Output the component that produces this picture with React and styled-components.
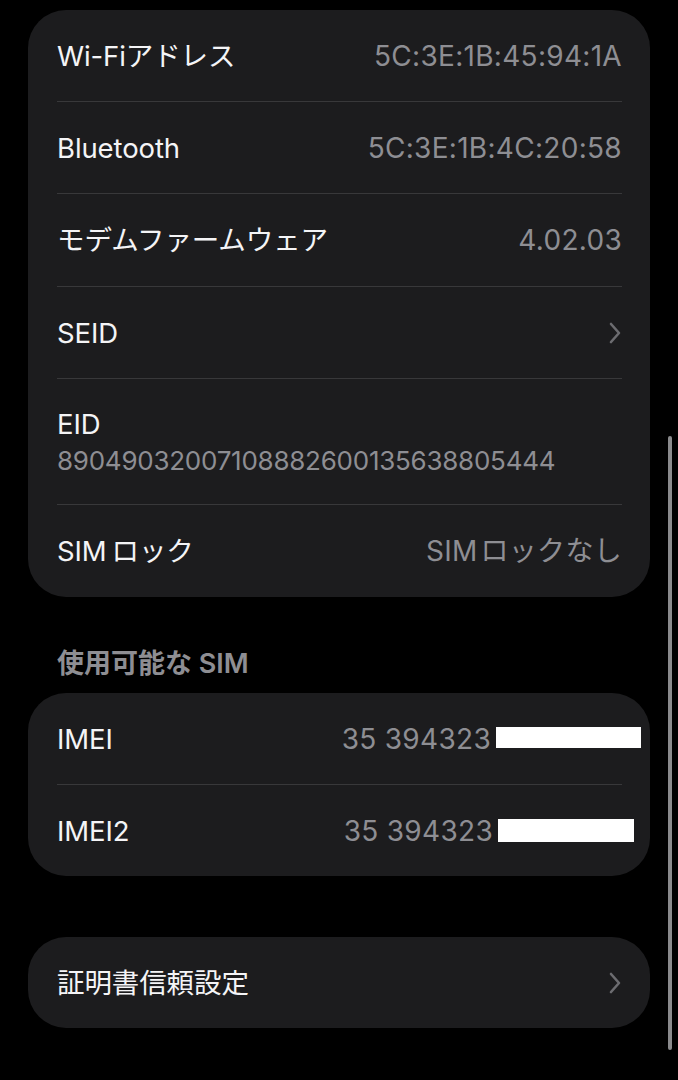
import styled, { createGlobalStyle } from 'styled-components'

const GlobalStyle = createGlobalStyle`
  html, body {
    margin: 0;
    padding: 0;
    background: #000;
  }
  body {
    font-family: Inter, "Noto Sans CJK JP", sans-serif;
    -webkit-font-smoothing: antialiased;
  }
`

const Page = styled.div`
  width: 678px;
  height: 1080px;
  overflow: hidden;
  background: #000;
  padding: 10px 28px 0 28px;
  box-sizing: border-box;
  display: flex;
  flex-direction: column;
`

const Card = styled.div`
  width: 622px;
  background: #1c1c1e;
  border-radius: ${p => p.$radius || 38}px;
  padding: 0 28px 0 29px;
  box-sizing: border-box;
  display: flex;
  flex-direction: column;
  margin-top: ${p => p.$top || 0}px;
`

const Row = styled.div`
  display: flex;
  align-items: center;
  justify-content: space-between;
  height: ${p => p.$h || 92}px;
  box-sizing: border-box;
  border-top: ${p => (p.$first ? 'none' : '1px solid #38383a')};
`

const StackRow = styled.div`
  display: flex;
  flex-direction: column;
  justify-content: center;
  gap: 4px;
  height: 126px;
  box-sizing: border-box;
  border-top: 1px solid #38383a;
`

const Label = styled.span`
  color: #f4f4f6;
  font-size: 27.5px;
  line-height: 34px;
  letter-spacing: -0.1px;
`

const Value = styled.span`
  color: #8e8e93;
  font-size: 28px;
  line-height: 34px;
  letter-spacing: 0.3px;
  display: flex;
  align-items: center;
  margin-right: ${p => p.$pull || 0}px;
`

const SubValue = styled.span`
  color: #8e8e93;
  font-size: 26px;
  line-height: 32px;
  letter-spacing: -0.25px;
`

const Redact = styled.span`
  display: inline-block;
  background: #fff;
  width: ${p => p.$w}px;
  height: ${p => p.$h}px;
  margin-left: 5px;
  margin-top: ${p => p.$dy || 0}px;
`

const SectionHeader = styled.div`
  color: #8e8e93;
  font-size: 27px;
  font-weight: 600;
  line-height: 34px;
  padding-left: 29px;
  margin-top: 50px;
  margin-bottom: 12px;
`

const ScrollBar = styled.div`
  position: fixed;
  right: 6px;
  top: 436px;
  width: 4px;
  height: 614px;
  border-radius: 2px;
  background: #8a8a8c;
`

const Chevron = () => (
  <svg width="14" height="22" viewBox="0 0 14 22">
    <polyline
      points="3,2 11,11 3,20"
      fill="none"
      stroke="#6c6c70"
      strokeWidth="2.6"
      strokeLinecap="round"
      strokeLinejoin="round"
    />
  </svg>
)

const App = () => {
  return (
    <>
      <GlobalStyle />
      <Page>
        <Card>
          <Row $first $h={91}>
            <Label>Wi-Fiアドレス</Label>
            <Value>5C:3E:1B:45:94:1A</Value>
          </Row>
          <Row>
            <Label>Bluetooth</Label>
            <Value>5C:3E:1B:4C:20:58</Value>
          </Row>
          <Row $h={93}>
            <Label>モデムファームウェア</Label>
            <Value>4.02.03</Value>
          </Row>
          <Row>
            <Label>SEID</Label>
            <Chevron />
          </Row>
          <StackRow>
            <Label>EID</Label>
            <SubValue>89049032007108882600135638805444</SubValue>
          </StackRow>
          <Row $h={93}>
            <Label>SIM{'\u2009'}ロック</Label>
            <Value>SIM{'\u200A'}ロックなし</Value>
          </Row>
        </Card>

        <SectionHeader>使用可能な SIM</SectionHeader>

        <Card>
          <Row $first $h={91}>
            <Label>IMEI</Label>
            <Value $pull={-19}>
              35 394323
              <Redact $w={145} $h={21} $dy={-2} />
            </Value>
          </Row>
          <Row>
            <Label>IMEI2</Label>
            <Value $pull={-12}>
              35 394323
              <Redact $w={136} $h={23} />
            </Value>
          </Row>
        </Card>

        <Card $top={61}>
          <Row $first $h={91}>
            <Label>証明書信頼設定</Label>
            <Chevron />
          </Row>
        </Card>
      </Page>
      <ScrollBar />
    </>
  )
}

export default App
